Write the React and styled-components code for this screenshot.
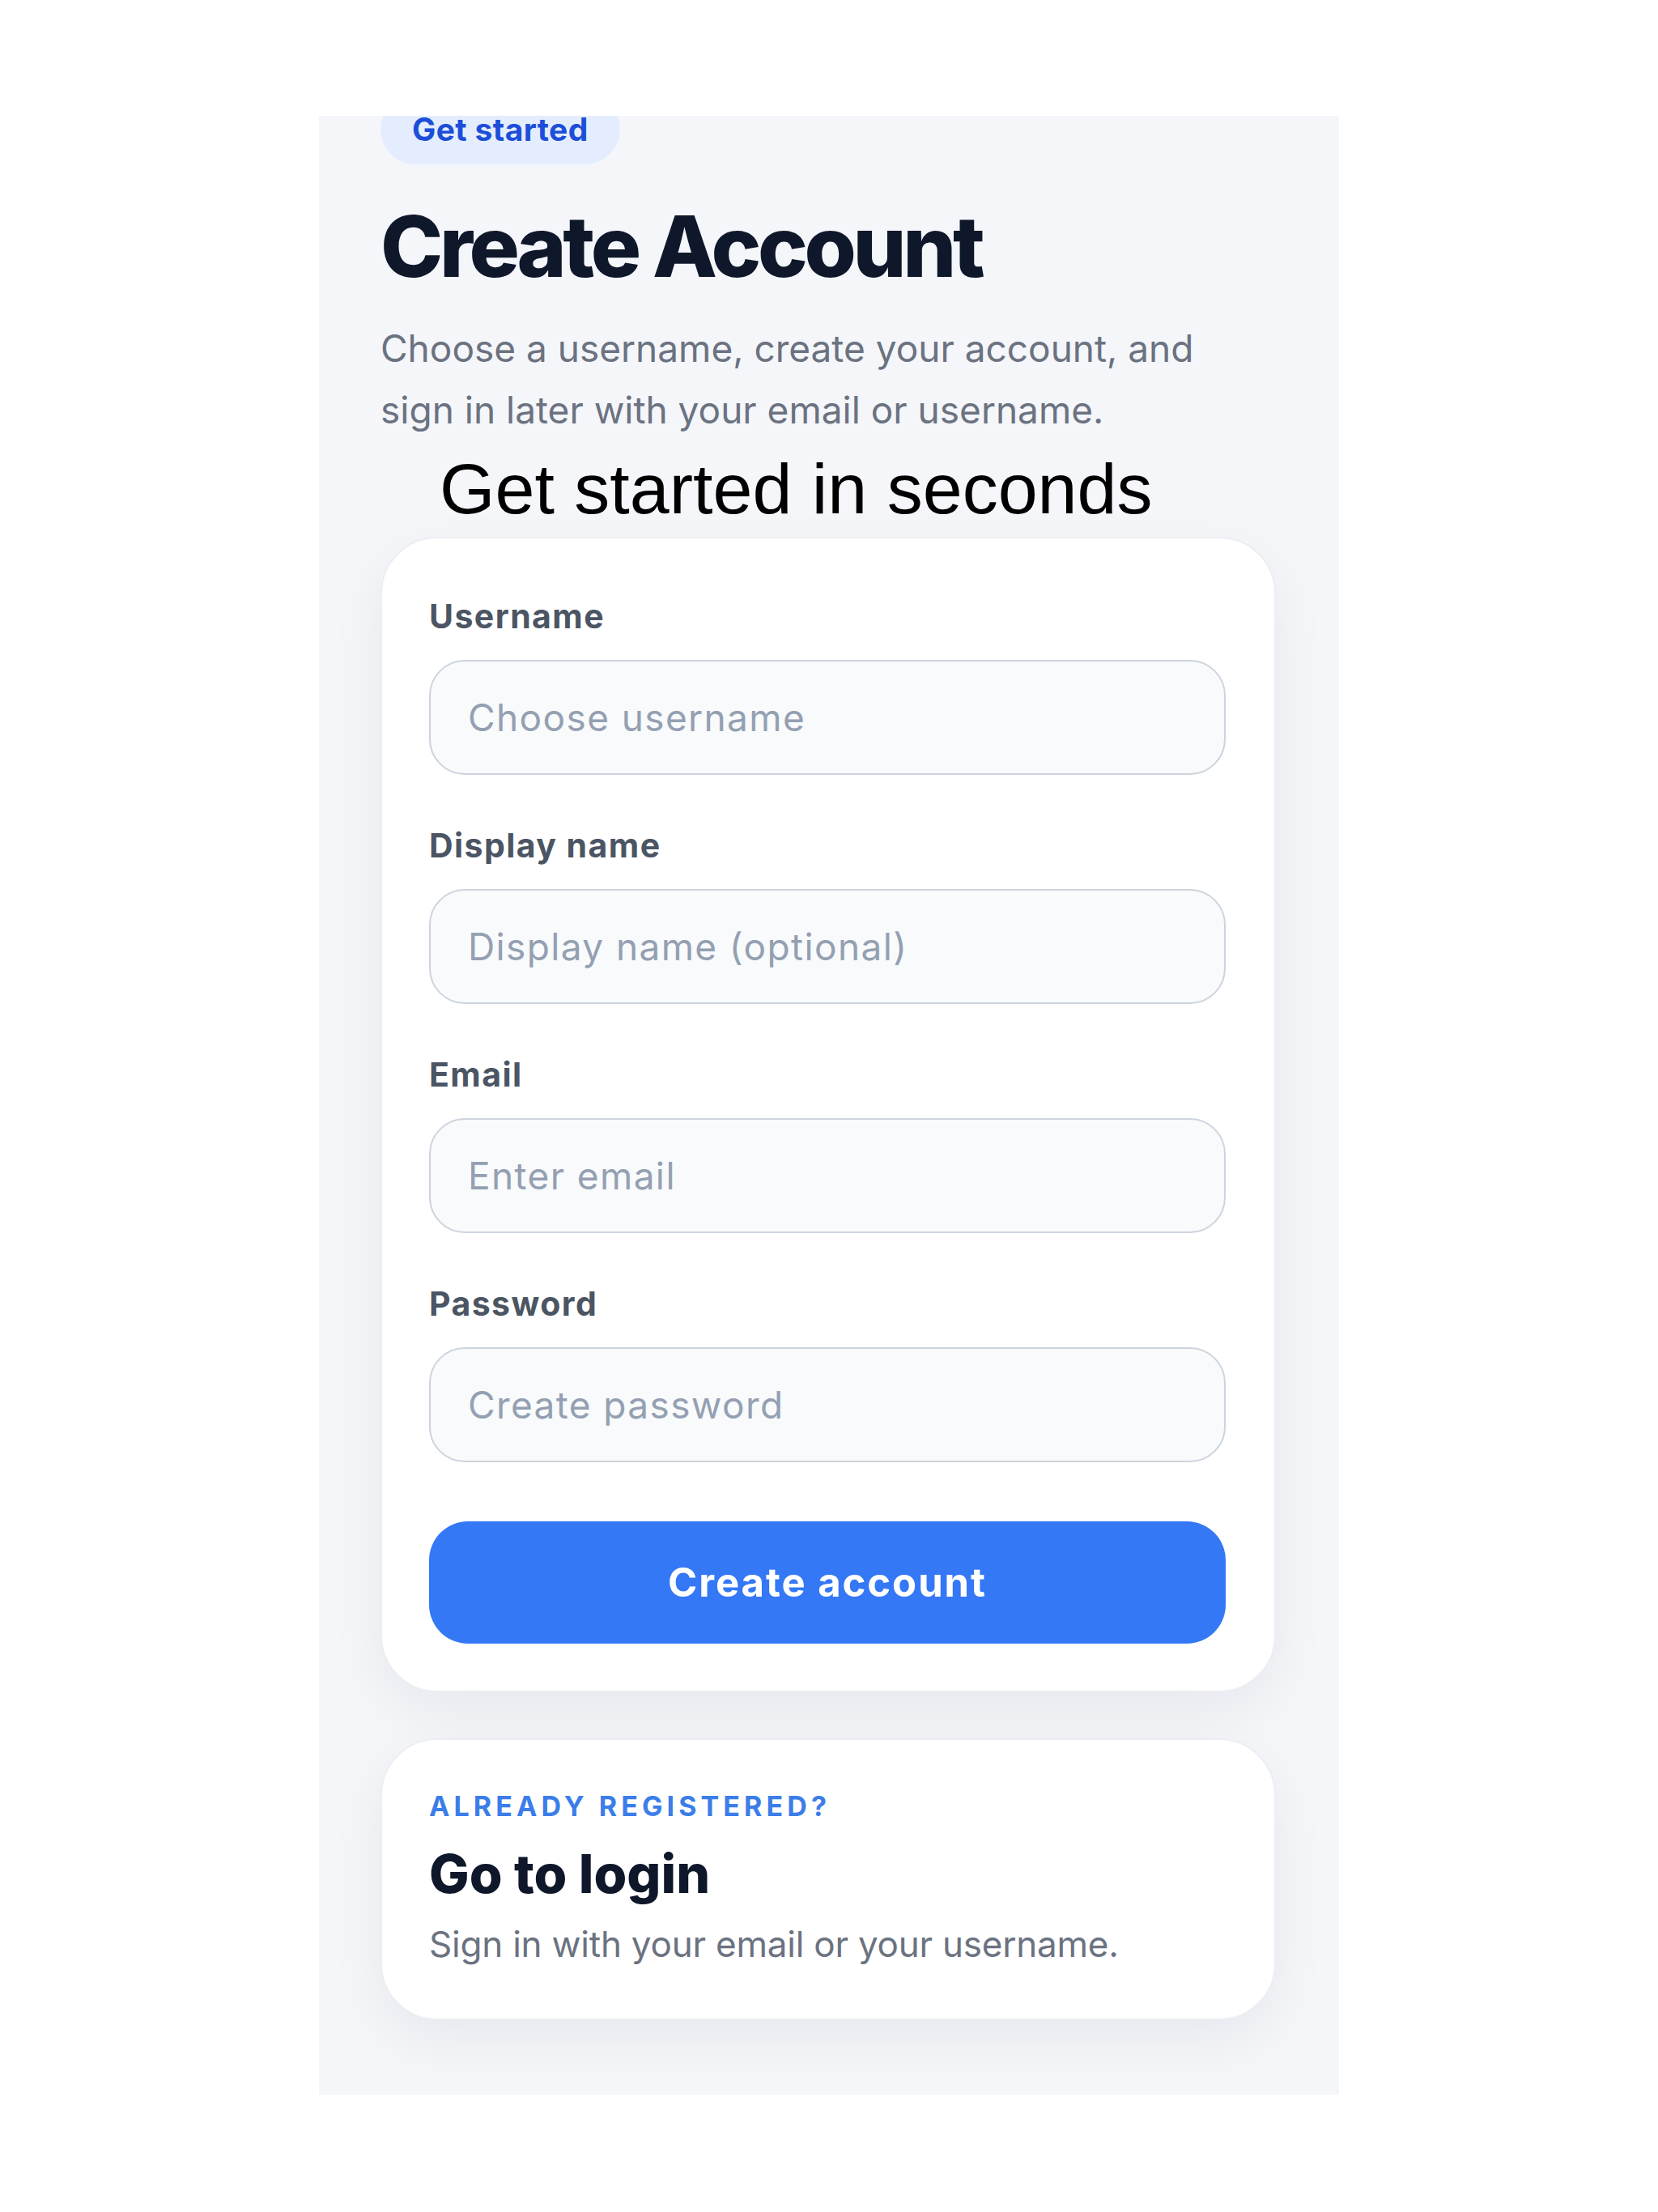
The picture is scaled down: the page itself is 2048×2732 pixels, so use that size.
import React from "react";
import styled, { createGlobalStyle } from "styled-components";

const GlobalStyle = createGlobalStyle`
  html, body {
    margin: 0;
    padding: 0;
    background: #ffffff;
  }
  body {
    font-family: Inter, "Noto Sans", "Liberation Sans", sans-serif;
    -webkit-font-smoothing: antialiased;
  }
  * { box-sizing: border-box; }
`;

const Page = styled.div`
  display: flex;
  justify-content: center;
  padding-top: 143px;
  min-height: 2732px;
`;

const Panel = styled.main`
  width: 1260px;
  height: 2444px;
  overflow: hidden;
  background: #f4f6fa;
  padding: 0 78px 92px 76px;
  display: flex;
  flex-direction: column;
`;

const Pill = styled.span`
  align-self: flex-start;
  margin-top: -27px;
  height: 88px;
  padding: 0 39px;
  border-radius: 44px;
  background: #e4edfd;
  color: #1d4ed8;
  font-size: 39px;
  font-weight: 650;
  letter-spacing: 0.01em;
  display: flex;
  align-items: center;
`;

const Title = styled.h1`
  margin: 44px 0 0;
  font-size: 104px;
  line-height: 114px;
  font-weight: 800;
  letter-spacing: -0.042em;
  color: #0f172a;
`;

const Lead = styled.p`
  margin: 31px 0 0;
  font-size: 46px;
  line-height: 76px;
  color: #6b7280;
  letter-spacing: 0;
`;

const Tagline = styled.h2`
  margin: 10px 0 10px 73px;
  font-family: "Liberation Sans", Arial, sans-serif;
  font-weight: 400;
  font-size: 88px;
  line-height: 99px;
  color: #000;
`;

const Card = styled.section`
  background: #ffffff;
  border: 2px solid #eceef2;
  border-radius: 70px;
  box-shadow: 0 24px 70px rgba(15, 23, 42, 0.06);
  padding: ${p => p.$pad};
  margin-top: ${p => p.$gap || 0}px;
  display: flex;
  flex-direction: column;
`;

const Field = styled.label`
  display: flex;
  flex-direction: column;
  & + & { margin-top: 63px; }
`;

const FieldLabel = styled.span`
  font-size: 41px;
  line-height: 48px;
  font-weight: 700;
  letter-spacing: 0.035em;
  color: #4b5563;
  margin-bottom: 30px;
`;

const Input = styled.input`
  height: 142px;
  border: 2px solid #cdd4de;
  border-radius: 44px;
  background: #f8fafc;
  padding: 0 46px;
  font-family: inherit;
  font-size: 46px;
  letter-spacing: 0.03em;
  color: #111827;
  outline: none;
  &::placeholder { color: #94a0b1; }
`;

const Button = styled.button`
  margin-top: 73px;
  height: 151px;
  border: none;
  border-radius: 48px;
  background: #3478f6;
  color: #ffffff;
  font-family: inherit;
  font-size: 49px;
  font-weight: 700;
  letter-spacing: 0.04em;
  cursor: pointer;
`;

const Eyebrow = styled.div`
  font-size: 34px;
  line-height: 40px;
  font-weight: 700;
  letter-spacing: 0.15em;
  color: #3b7de9;
`;

const LoginTitle = styled.h3`
  margin: 26px 0 0;
  font-size: 66px;
  line-height: 75px;
  font-weight: 800;
  letter-spacing: 0;
  color: #0f172a;
`;

const LoginText = styled.p`
  margin: 19px 0 0;
  font-size: 44px;
  line-height: 60px;
  letter-spacing: -0.005em;
  color: #6b7280;
`;

const fields = [
  { label: "Username", placeholder: "Choose username", type: "text" },
  { label: "Display name", placeholder: "Display name (optional)", type: "text" },
  { label: "Email", placeholder: "Enter email", type: "email" },
  { label: "Password", placeholder: "Create password", type: "password" },
];

export default function App() {
  return (
    <>
      <GlobalStyle />
      <Page>
        <Panel>
          <Pill>Get started</Pill>
          <Title>Create Account</Title>
          <Lead>
            Choose a username, create your account, and
            <br />
            sign in later with your email or username.
          </Lead>
          <Tagline>Get started in seconds</Tagline>

          <Card $pad="72px 60px 58px 58px">
            {fields.map(f => (
              <Field key={f.label}>
                <FieldLabel>{f.label}</FieldLabel>
                <Input type={f.type} placeholder={f.placeholder} />
              </Field>
            ))}
            <Button type="button">Create account</Button>
          </Card>

          <Card $pad="62px 60px 62px 58px" $gap={57}>
            <Eyebrow>ALREADY REGISTERED?</Eyebrow>
            <LoginTitle>Go to login</LoginTitle>
            <LoginText>Sign in with your email or your username.</LoginText>
          </Card>
        </Panel>
      </Page>
    </>
  );
}
